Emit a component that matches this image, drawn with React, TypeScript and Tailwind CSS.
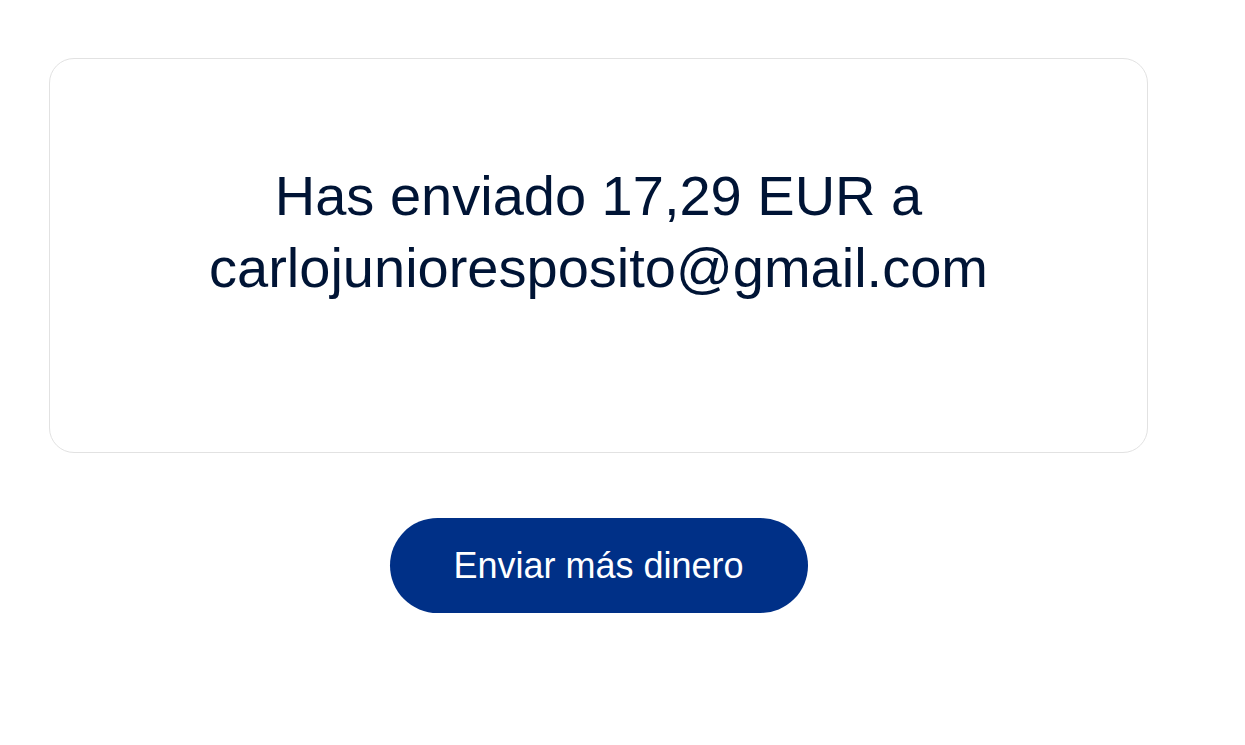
export default function App() {
  return (
    <div className="min-h-screen bg-white font-['Liberation_Sans',Arial,sans-serif]">
      <div className="pl-[49px] pt-[58px] w-[1148px]">
        <div className="rounded-[25px] border border-[#e2e2e2] px-10 pt-[101px] pb-[148px] text-center">
          <h1 className="text-[56px] leading-[72px] text-[#001435] font-normal">
            Has enviado 17,29 EUR a
            <br />
            carlojunioresposito@gmail.com
          </h1>
        </div>
        <div className="mt-[65px] flex justify-center">
          <button
            type="button"
            className="h-[95px] w-[418px] rounded-full bg-[#003087] text-white text-[36px]"
          >
            Enviar más dinero
          </button>
        </div>
      </div>
    </div>
  );
}
